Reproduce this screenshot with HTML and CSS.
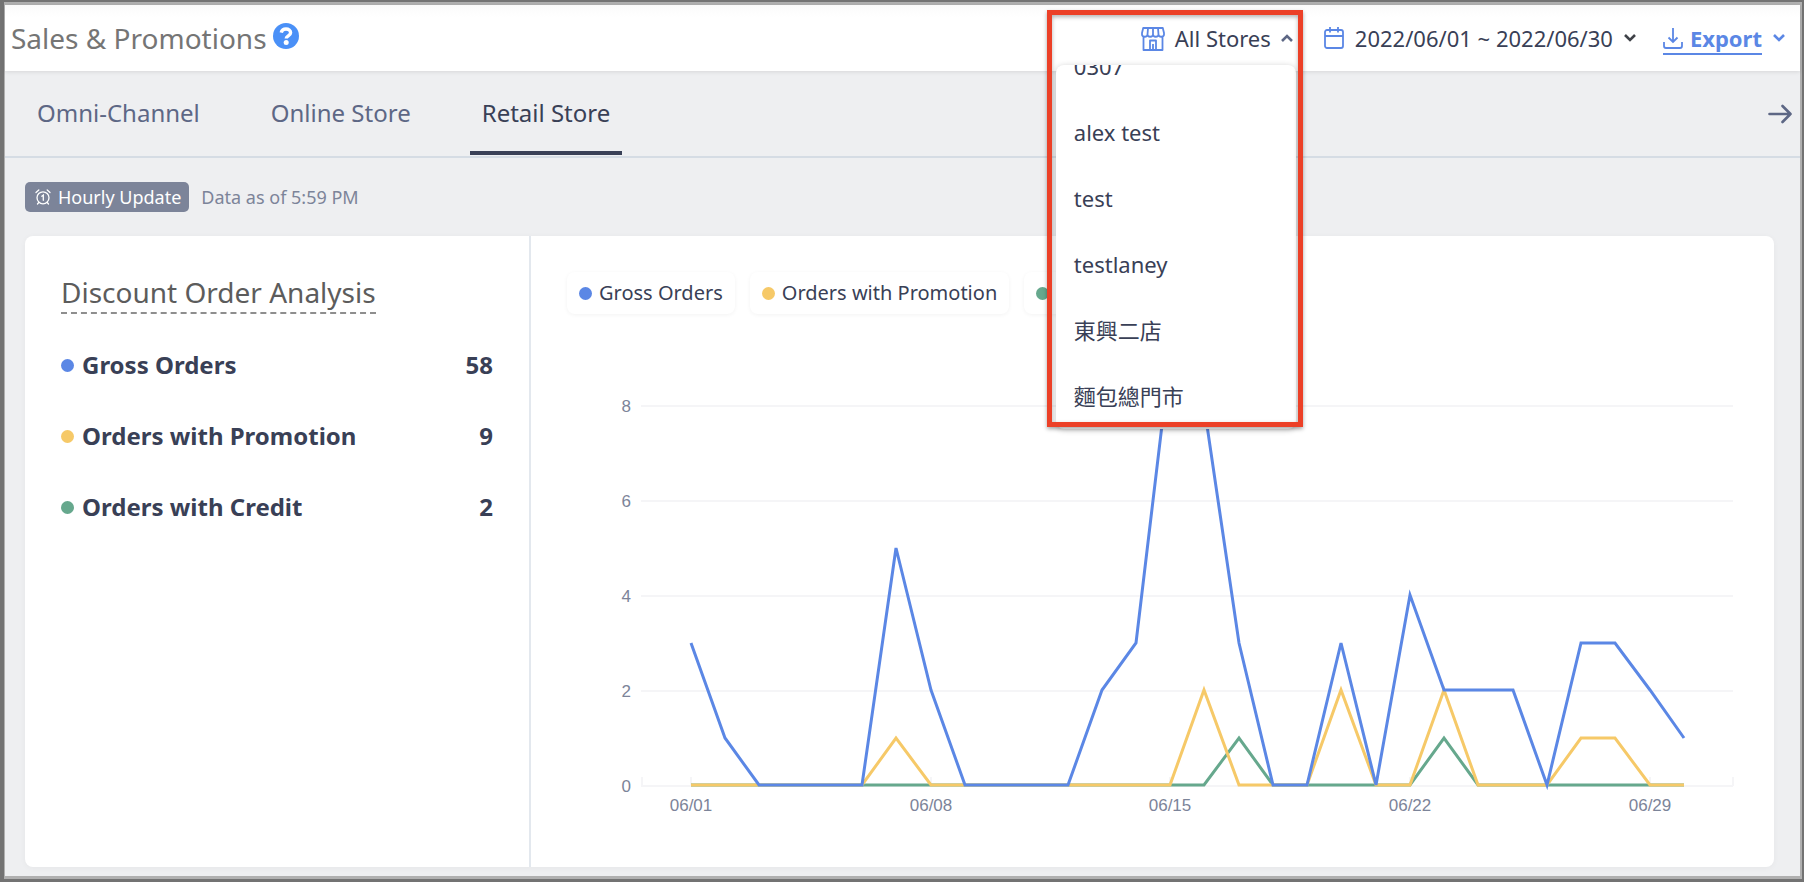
FILE: index.html
```html
<!DOCTYPE html>
<html lang="en">
<head>
<meta charset="utf-8">
<meta name="viewport" content="width=device-width, initial-scale=1">
<title>Sales &amp; Promotions</title>
<link rel="stylesheet" href="styles.css">
</head>
<body>
<div class="frame">
<div class="app">
  <header class="topbar">
    <h1 class="page-title">Sales &amp; Promotions</h1>
    <button class="help" type="button" aria-label="Help">
      <svg width="26" height="26" viewBox="0 0 26 26" fill="none"><circle cx="13" cy="13" r="13" fill="#4a90f7"/><path d="M8.200 9.600C8.800 7.200 10.500 6 13 6c2.700 0 4.600 1.500 4.600 3.700 0 3.200-4.400 3-4.400 5.800" stroke="#fff" stroke-width="3.400"/><circle cx="13.200" cy="19.600" r="2.500" fill="#fff"/></svg>
    </button>
    <div class="controls">
      <div class="store-picker">
        <button class="control" type="button" aria-haspopup="listbox" aria-expanded="true">
          <svg class="icon" width="24" height="26" viewBox="0 -2 24 26" fill="none" stroke="#5b87e5" stroke-width="1.800" stroke-linejoin="round"><path d="M2.200 1h19.600l1.200 5v1.500a2.700 2.200 0 0 1-5.500 0a2.700 2.200 0 0 1-5.500 0a2.700 2.200 0 0 1-5.500 0a2.700 2.200 0 0 1-5.500 0V6zM7 1l-.5 6.500M12 1v6.500M17 1l.5 6.500M2.500 10v13h19V10M9 23v-9.500h6V23M12 17v6"/></svg>
          <span>All Stores</span>
          <svg class="chevron" width="12" height="8" viewBox="0 0 12 8" fill="none" stroke="#5d6785" stroke-width="2.600"><path d="M1 7l5-5 5 5"/></svg>
        </button>
        <ul class="store-menu" role="listbox" aria-label="Stores">
          <li role="option">0307</li>
          <li role="option">alex test</li>
          <li role="option">test</li>
          <li role="option">testlaney</li>
          <li role="option">東興二店</li>
          <li role="option">麵包總門市</li>
        </ul>
        <div class="highlight"></div>
      </div>
      <button class="control date-range" type="button">
        <svg class="icon" width="20" height="22" viewBox="0 0 20 22" fill="none" stroke="#5b87e5" stroke-width="1.800"><rect x="1" y="3" width="18" height="18" rx="2"/><path d="M1 9h18M6 0v5.500M14 0v5.500"/></svg>
        <span>2022/06/01 ~ 2022/06/30</span>
        <svg class="chevron" width="12" height="8" viewBox="0 0 12 8" fill="none" stroke="#3f4248" stroke-width="2.600"><path d="M1 1l5 5 5-5"/></svg>
      </button>
      <button class="control export" type="button">
        <span class="export-label">
          <svg width="20" height="21" viewBox="0 0 20 21" fill="none" stroke="#5b87e5" stroke-width="1.800"><path d="M10 0v14M5.500 9.500L10 14l4.500-4.500M1 14v4q0 2 2 2h14q2 0 2-2v-4"/></svg>
          <span>Export</span>
        </span>
        <svg class="chevron" width="12" height="8" viewBox="0 0 12 8" fill="none" stroke="#5b87e5" stroke-width="2.600"><path d="M1 1l5 5 5-5"/></svg>
      </button>
    </div>
  </header>

  <nav class="tabs">
    <a class="tab" href="#omni">Omni-Channel</a>
    <a class="tab" href="#online">Online Store</a>
    <a class="tab active" href="#retail" aria-current="page">Retail Store</a>
    <button class="next" type="button" aria-label="Next">
      <svg width="24" height="20" viewBox="0 0 24 20" fill="none" stroke="#5d6785" stroke-width="2.600" stroke-linecap="round" stroke-linejoin="round"><path d="M1.500 10h21M14.500 2l8 8-8 8"/></svg>
    </button>
  </nav>

  <main class="content">
    <div class="status">
      <span class="badge">
        <svg width="16" height="16" viewBox="0 0 16 16" fill="none" stroke="#fff" stroke-width="1.300" stroke-linecap="round"><circle cx="8" cy="8.800" r="6"/><path d="M1 3.500L3.800 1M15 3.500L12.200 1M3.800 13.500l-1.300 1.500M12.200 13.500l1.300 1.500M6.800 7.200L8.300 6v5.300"/></svg>
        <span>Hourly Update</span>
      </span>
      <span class="as-of">Data as of 5:59 PM</span>
    </div>

    <section class="card">
      <div class="summary">
        <h2 class="card-title">Discount Order Analysis</h2>
        <dl class="metrics">
          <div class="metric"><dt><i class="dot blue"></i>Gross Orders</dt><dd>58</dd></div>
          <div class="metric"><dt><i class="dot yellow"></i>Orders with Promotion</dt><dd>9</dd></div>
          <div class="metric"><dt><i class="dot green"></i>Orders with Credit</dt><dd>2</dd></div>
        </dl>
      </div>
      <div class="chart-panel">
        <div class="legend">
          <button class="legend-item" type="button"><i class="dot blue"></i>Gross Orders</button>
          <button class="legend-item" type="button"><i class="dot yellow"></i>Orders with Promotion</button>
          <button class="legend-item" type="button"><i class="dot green"></i>Orders with Credit</button>
        </div>
        <svg class="chart" viewBox="0 0 1243 553" role="img" aria-label="Orders per day">
          <g class="grid">
            <path d="M110 92H1202M110 187H1202M110 282H1202M110 377H1202M110 472H1202"/>
            <path d="M111 472v-9M160 472v-9M400 472v-9M639 472v-9M879 472v-9M1119 472v-9M1202 472v-9"/>
          </g>
          <g class="axis axis-y">
            <text x="100" y="98">8</text><text x="100" y="193">6</text><text x="100" y="288">4</text><text x="100" y="383">2</text><text x="100" y="478">0</text>
          </g>
          <g class="axis axis-x">
            <text x="160" y="497">06/01</text><text x="400" y="497">06/08</text><text x="639" y="497">06/15</text><text x="879" y="497">06/22</text><text x="1119" y="497">06/29</text>
          </g>
          <g class="series">
            <polyline class="line-green" points="160,471 673,471 708,424 742,471 879,471 913,424 947,471 1153,471"/>
            <polyline class="line-yellow" points="160,471 331,471 365,424 400,471 639,471 673,376 708,471 776,471 810,376 845,471 879,471 913,376 947,471 1016,471 1050,424 1084,424 1119,471 1153,471"/>
            <polyline class="line-blue" points="160,329 194,424 228,471 331,471 365,234 400,376 434,471 537,471 571,376 605,329 639,44 673,91 708,329 742,471 776,471 810,329 845,471 879,281 913,376 982,376 1016,471 1050,329 1084,329 1119,376 1153,424"/>
          </g>
        </svg>
      </div>
    </section>
  </main>
</div>
</div>
</body>
</html>
```
FILE: styles.css
```css
* { box-sizing: border-box; }
body {
  margin: 0;
  font-family: "Noto Sans", "Noto Sans CJK TC", sans-serif;
  color: #394056;
}
h1, h2, ul, dl, dd { margin: 0; padding: 0; }
button { font: inherit; color: inherit; background: none; border: 0; padding: 0; cursor: pointer; }
svg { display: block; flex: none; }

.frame {
  min-height: 100vh;
  display: flex;
  border: solid #737373;
  border-width: 2px 2px 3px 4px;
}
.app {
  flex: 1;
  min-width: 0;
  display: flex;
  flex-direction: column;
  border: solid #b0b0b0;
  border-width: 3px 2px 3px 1px;
  background: #eeeff1;
}

.topbar {
  position: relative;
  z-index: 2;
  display: flex;
  align-items: center;
  height: 66px;
  padding: 0 15px 0 6px;
  background: linear-gradient(#fafafa, #fff 12px);
  box-shadow: 0 1px 4px rgba(0, 0, 0, .1);
}
.page-title { font-size: 28px; line-height: 40px; font-weight: 400; color: #757575; }
.help { margin: 0 0 4px 6px; }
.controls { margin-left: auto; display: flex; align-items: center; gap: 31px; font-size: 22px; line-height: 30px; }
.control { display: flex; align-items: center; gap: 11px; white-space: nowrap; }
.store-picker { position: relative; }
.store-picker .control { gap: 10px; }
.export { font-weight: 700; color: #5b87e5; margin-left: -4px; }
.export-label { display: flex; align-items: center; gap: 7px; padding-top: 2px; border-bottom: 2px solid #5b87e5; }

.store-menu {
  position: absolute;
  top: 42px;
  right: -3px;
  width: 240px;
  height: 364px;
  display: flex;
  flex-direction: column;
  justify-content: flex-end;
  overflow: hidden;
  list-style: none;
  border-radius: 8px;
  background: #fff;
  box-shadow: 0 1px 6px rgba(0, 0, 0, .2);
}
.store-menu li { flex: none; padding: 0 18px; line-height: 66px; }
.highlight {
  position: absolute;
  top: -13px;
  right: -10px;
  width: 256px;
  height: 417px;
  border: 5px solid #ec4027;
  box-shadow: 0 2px 4px rgba(0, 0, 0, .35), inset 0 2px 4px rgba(0, 0, 0, .3);
  pointer-events: none;
}

.tabs {
  display: flex;
  align-items: stretch;
  gap: 47px;
  height: 87px;
  padding: 0 8px 0 20px;
  border-bottom: 2px solid #d5dce4;
}
.tab {
  display: flex;
  align-items: center;
  padding: 4px 12px 0;
  margin-bottom: 1px;
  border-bottom: 4px solid transparent;
  font-size: 24px;
  line-height: 32px;
  color: #5d6785;
  text-decoration: none;
}
.tab.active { color: #394056; border-color: #394056; }
.next { margin-left: auto; }

.content { flex: 1; display: flex; flex-direction: column; padding: 24px 26px 9px 20px; }
.status { display: flex; align-items: center; gap: 12px; font-size: 18px; line-height: 30px; }
.badge {
  display: flex;
  align-items: center;
  gap: 7px;
  padding: 0 8px 0 10px;
  border-radius: 5px;
  background: #7c8499;
  color: #fff;
}
.as-of { color: #7c8499; }

.card {
  flex: 1;
  display: grid;
  grid-template-columns: 506px minmax(0, 1fr);
  margin-top: 24px;
  border-radius: 8px;
  background: #fff;
  box-shadow: 0 1px 6px rgba(0, 0, 0, .04);
}
.summary { padding: 36px; border-right: 2px solid #e3e8ee; }
.card-title {
  display: inline-block;
  border-bottom: 2px dashed #8e8e8e;
  font-size: 28px;
  line-height: 40px;
  font-weight: 400;
  color: #5c5c5c;
}
.metrics { display: flex; flex-direction: column; gap: 39px; margin-top: 35px; font-size: 24px; line-height: 32px; font-weight: 700; }
.metric { display: flex; justify-content: space-between; }
.metric dt { display: flex; align-items: center; gap: 8px; }
.dot { flex: none; width: 13px; height: 13px; border-radius: 50%; }
.blue { background: #5b87e5; }
.yellow { background: #f6c968; }
.green { background: #66a88d; }

.chart-panel { padding-top: 36px; }
.legend { display: flex; gap: 15px; padding-left: 36px; height: 42px; }
.legend-item {
  display: flex;
  align-items: center;
  gap: 7px;
  padding: 0 12px;
  border-radius: 8px;
  font-size: 20px;
  line-height: 28px;
  white-space: nowrap;
  box-shadow: 0 1px 4px rgba(0, 0, 0, .05);
}
.chart { width: 100%; height: auto; }
.grid { stroke: #f5f5f7; stroke-width: 2; fill: none; }
.axis { font-family: "Liberation Sans", Arial, sans-serif; font-size: 17px; fill: #7c8499; }
.axis-y { text-anchor: end; }
.axis-x { text-anchor: middle; }
.series { fill: none; stroke-width: 3; }
.line-blue { stroke: #5b87e5; }
.line-yellow { stroke: #f6c968; }
.line-green { stroke: #66a88d; }
```
